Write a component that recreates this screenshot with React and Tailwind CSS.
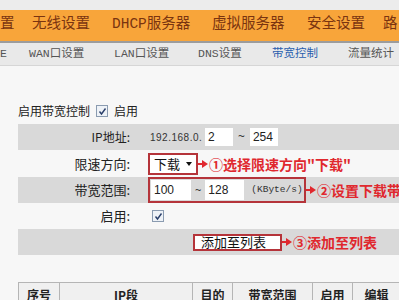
import React from 'react';

const cjk = "font-['Noto_Sans_CJK_SC',sans-serif]";
const mono = "font-['Liberation_Mono','Noto_Sans_CJK_SC',monospace]";

function Arrow() {
  return (
    <span className="flex shrink-0 items-center">
      <span className="h-[2px] w-[4px] bg-[#e0282e]" />
      <span className="h-0 w-0 border-y-[4px] border-l-[6px] border-y-transparent border-l-[#e0282e]" />
    </span>
  );
}

function Note({ children }) {
  return (
    <span className={`ml-[1px] shrink-0 whitespace-nowrap text-[14px] font-bold leading-none text-[#e0282e] ${cjk}`}>{children}</span>
  );
}

function Check() {
  return (
    <span className="flex h-[12px] w-[12px] items-center justify-center border border-[#8a9bb0] bg-[#eef2f7]">
      <svg width="9" height="9" viewBox="0 0 9 9">
        <path d="M1.5 4.5 L3.5 7 L7.5 1.5" fill="none" stroke="#2a3f6a" strokeWidth="1.4" />
      </svg>
    </span>
  );
}

function Row({ label, gray, children, labelClass = 'text-[13px]' }) {
  return (
    <div className={`flex h-[26px] items-center whitespace-nowrap ${gray ? 'bg-[#d9d9d9]' : ''}`}>
      <div className={`w-[114px] shrink-0 pr-[2px] text-right text-[#222] ${labelClass} ${cjk}`}>{label}</div>
      <div className="ml-[16px] flex shrink-0 items-center">{children}</div>
    </div>
  );
}

export default function App() {
  const nav = [
    ['置', 'w-[32px]'],
    ['无线设置', 'w-[80px]'],
    ['DHCP服务器', 'w-[100px]'],
    ['虚拟服务器', 'w-[95px]'],
    ['安全设置', 'w-[76px]'],
    ['路', 'w-[16px]'],
  ];
  const tabs = [
    ['E', 'w-[29px]', ''],
    ['WAN口设置', 'w-[85px]', ''],
    ['LAN口设置', 'w-[84px]', ''],
    ['DNS设置', 'w-[74px]', ''],
    ['带宽控制', 'w-[76px]', 'text-[#2b5fae]'],
    ['流量统计', 'w-[51px]', ''],
  ];
  return (
    <div className="flex h-[300px] w-[399px] flex-col overflow-hidden bg-[#f7f7f7]">
      <div className="h-[10px] bg-[#ececec]" />
      <div className="flex h-[32px] items-center overflow-hidden whitespace-nowrap bg-[#f8a53a]">
        {nav.map(([t, w]) => (
          <span key={t} className={`shrink-0 text-[14.5px] text-[#7a3410] ${mono} ${w}`}>{t}</span>
        ))}
      </div>
      <div className="h-[2px] bg-[#9c9c9c]" />
      <div className="flex h-[23px] items-center overflow-hidden whitespace-nowrap bg-[#e9e9e9]">
        {tabs.map(([t, w, c]) => (
          <span key={t} className={`shrink-0 text-[11.5px] ${c || 'text-[#555]'} ${mono} ${w}`}>{t}</span>
        ))}
      </div>
      <div className="h-[1px] bg-[#d6d6d6]" />

      <div className="flex flex-col overflow-hidden pl-[18px] pt-[36px]">
        <div className={`flex h-[18px] items-center text-[12px] text-[#222] ${cjk}`}>
          <span>启用带宽控制</span>
          <span className="ml-[6px]"><Check /></span>
          <span className="ml-[6px]">启用</span>
        </div>

        <div className="mt-[4px] flex flex-col">
          <Row label="IP地址:" gray labelClass="text-[12px]">
            <span className="w-[57px] pl-[2px] text-[10px] tracking-[0.5px] text-[#333] font-['Liberation_Sans',sans-serif]">192.168.0.</span>
            <span className="flex h-[18px] w-[28px] items-center bg-white pl-[3px] text-[12px] text-[#222] font-['Liberation_Sans',sans-serif]">2</span>
            <span className="mx-[5px] text-[12px] text-[#333]">~</span>
            <span className="flex h-[18px] w-[28px] items-center bg-white pl-[3px] text-[12px] text-[#222] font-['Liberation_Sans',sans-serif]">254</span>
          </Row>
          <div className="flex h-[27px] items-center whitespace-nowrap">
            <div className={`w-[114px] shrink-0 pr-[2px] text-right text-[13px] text-[#222] ${cjk}`}>限速方向:</div>
            <div className="ml-[16px] flex shrink-0 items-center">
              <span className="flex h-[22px] w-[50px] items-center justify-between border-2 border-[#b5343a] bg-white px-[4px]">
                <span className={`text-[13px] text-[#111] ${cjk}`}>下载</span>
                <span className="h-0 w-0 border-x-[3px] border-t-[4px] border-x-transparent border-t-[#111]" />
              </span>
              <Arrow />
              <Note>①选择限速方向"下载"</Note>
            </div>
          </div>
          <Row label="带宽范围:" gray>
            <span className="flex h-[26px] w-[158px] items-center border-2 border-[#b5343a] pl-[1px]">
              <span className="flex h-[20px] w-[40px] items-center bg-white pl-[3px] text-[12px] text-[#222] font-['Liberation_Sans',sans-serif]">100</span>
              <span className="mx-[4px] text-[11px] text-[#333]">~</span>
              <span className="flex h-[20px] w-[39px] items-center bg-white pl-[3px] text-[12px] text-[#222] font-['Liberation_Sans',sans-serif]">128</span>
              <span className="ml-[7px] text-[9.5px] text-[#333] font-['Liberation_Mono',monospace]">(KByte/s)</span>
            </span>
            <Arrow />
            <Note>②设置下载带宽</Note>
          </Row>
          <Row label="启用:">
            <span className="ml-[4px]"><Check /></span>
          </Row>
          <div className="flex h-[26px] items-center whitespace-nowrap bg-[#d9d9d9]">
            <span className={`ml-[175px] flex h-[17px] w-[89px] shrink-0 items-center border-2 border-[#b5343a] bg-white pl-[6px] text-[13px] text-[#111] ${cjk}`}>添加至列表</span>
            <Arrow />
            <Note>③添加至列表</Note>
          </div>
        </div>

        <div className={`mt-[27px] flex h-[24px] border-t border-l border-[#b5b5b5] bg-[#f0f0f0] text-[12px] font-bold text-[#222] ${cjk}`}>
          {[
            ['序号', 'w-[41px]'],
            ['IP段', 'w-[133px]'],
            ['目的', 'w-[40px]'],
            ['带宽范围', 'w-[80px]'],
            ['启用', 'w-[40px]'],
            ['编辑', 'w-[48px]'],
          ].map(([t, w]) => (
            <div key={t} className={`flex shrink-0 justify-center border-r border-[#b5b5b5] pt-[3px] ${w}`}>{t}</div>
          ))}
        </div>
      </div>
    </div>
  );
}
